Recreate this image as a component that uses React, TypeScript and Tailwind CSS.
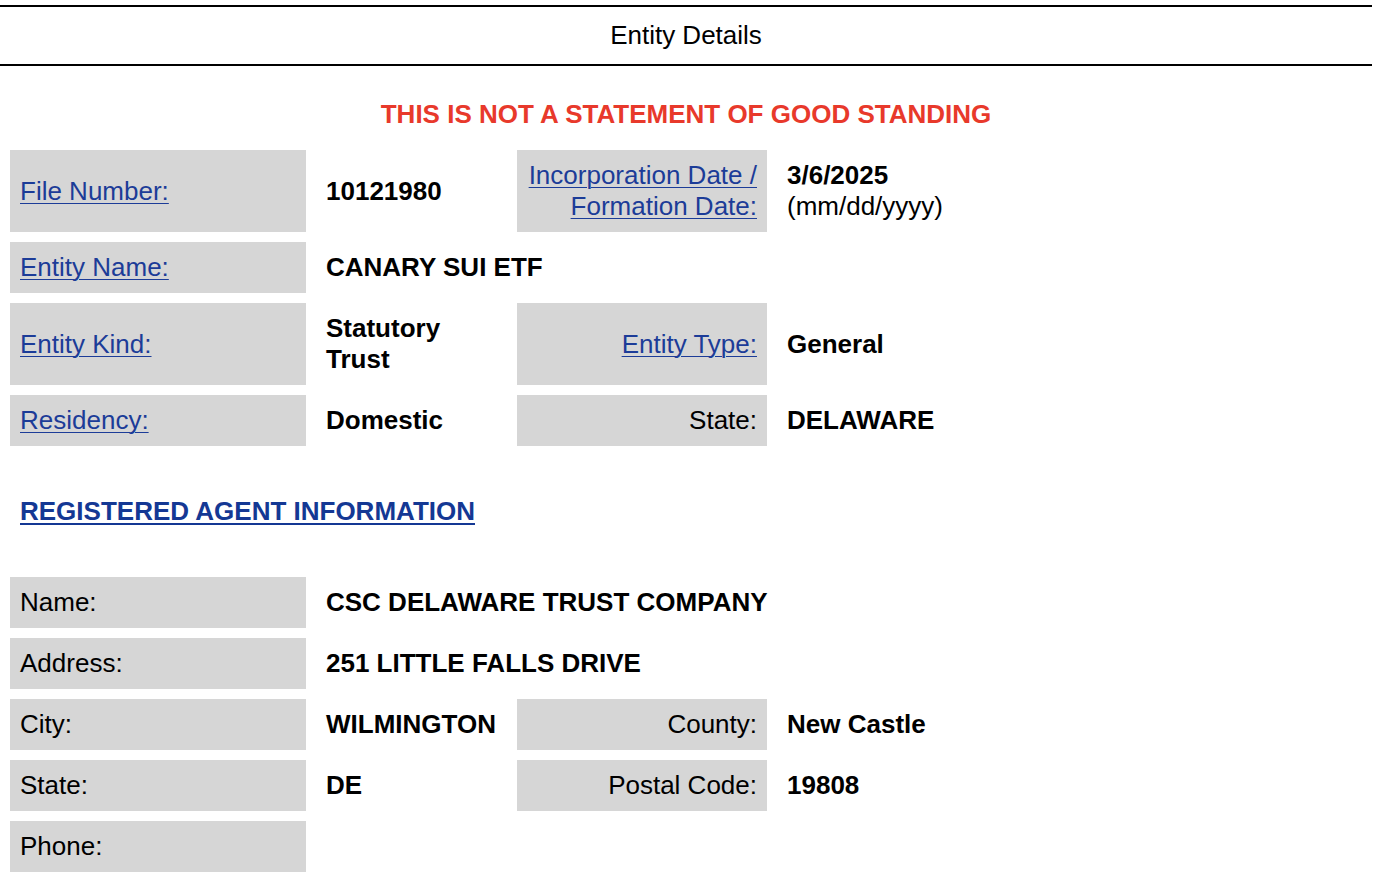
const font = { fontFamily: '"Liberation Sans", Arial, Helvetica, sans-serif' };

function Label({ children, right, link, className = "" }: { children: React.ReactNode; right?: boolean; link?: boolean; className?: string }) {
  return (
    <div className={`flex items-center bg-[#d6d6d6] px-[10px] py-[10px] ${right ? "justify-end text-right" : ""} ${className}`}>
      {link ? (
        <a href="#" className="text-[#1c3c98] underline decoration-1 underline-offset-[3px]">
          {children}
        </a>
      ) : (
        <span className="text-black">{children}</span>
      )}
    </div>
  );
}

function Value({ children, className = "" }: { children?: React.ReactNode; className?: string }) {
  return <div className={`flex items-center px-[10px] py-[10px] font-bold text-black ${className}`}>{children}</div>;
}

export default function App() {
  return (
    <div className="min-h-screen bg-white text-[26px] leading-[31px]" style={font}>
      <div className="pt-[5px]">
        <div className="flex h-[61px] w-[1372px] items-center justify-center border-y-2 border-black">
          <span className="text-black">Entity Details</span>
        </div>
      </div>

      <p className="mt-[33px] pr-[4px] text-center font-bold text-[#e8392b]">THIS IS NOT A STATEMENT OF GOOD STANDING</p>

      <div className="mt-[20px] grid grid-cols-[296px_191px_250px_1fr] gap-[10px] px-[10px]">
        <Label link className="h-[82px]">File Number:</Label>
        <Value>10121980</Value>
        <Label link right>
          <span className="block">Incorporation Date /</span>
          <span className="block">Formation Date:</span>
        </Label>
        <div className="flex flex-col justify-center px-[10px] py-[10px] text-black">
          <span className="font-bold">3/6/2025</span>
          <span>(mm/dd/yyyy)</span>
        </div>

        <Label link className="h-[51px]">Entity Name:</Label>
        <Value className="col-span-3">CANARY SUI ETF</Value>

        <Label link className="h-[82px]">Entity Kind:</Label>
        <Value>
          <span>
            Statutory
            <br />
            Trust
          </span>
        </Value>
        <Label link right>Entity Type:</Label>
        <Value>General</Value>

        <Label link className="h-[51px]">Residency:</Label>
        <Value>Domestic</Value>
        <Label right>State:</Label>
        <Value>DELAWARE</Value>
      </div>

      <div className="mt-[50px] px-[20px]">
        <a href="#" className="font-bold text-[#143894] underline decoration-2 underline-offset-[3px]">
          REGISTERED AGENT INFORMATION
        </a>
      </div>

      <div className="mt-[50px] grid grid-cols-[296px_191px_250px_1fr] gap-[10px] px-[10px] pb-[20px]">
        <Label className="h-[51px]">Name:</Label>
        <Value className="col-span-3">CSC DELAWARE TRUST COMPANY</Value>

        <Label className="h-[51px]">Address:</Label>
        <Value className="col-span-3">251 LITTLE FALLS DRIVE</Value>

        <Label className="h-[51px]">City:</Label>
        <Value>WILMINGTON</Value>
        <Label right>County:</Label>
        <Value>New Castle</Value>

        <Label className="h-[51px]">State:</Label>
        <Value>DE</Value>
        <Label right>Postal Code:</Label>
        <Value>19808</Value>

        <Label className="h-[51px]">Phone:</Label>
        <Value className="col-span-3"></Value>
      </div>
    </div>
  );
}
